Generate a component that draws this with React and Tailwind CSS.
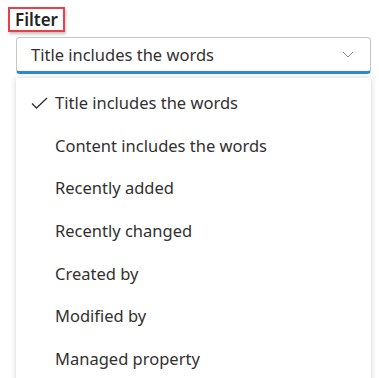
import React from "react";

const items = [
  "Title includes the words",
  "Content includes the words",
  "Recently added",
  "Recently changed",
  "Created by",
  "Modified by",
  "Managed property",
];

export default function App() {
  return (
    <div className="w-[379px] h-[378px] overflow-hidden bg-white relative" style={{ fontFamily: '"Noto Sans", "Open Sans", sans-serif' }}>
      <div className="pt-[7px] pl-[8px]">
        <div className="inline-flex items-center h-[25px] pl-[5px] pr-[5px] border-2 border-[#e8404a] shadow-[1px_2px_3px_rgba(0,0,0,0.25)]">
          <span className="text-[17px] font-semibold text-[#252423] leading-none">Filter</span>
        </div>
      </div>
      <div className="ml-[16px] mt-[5px] w-[355px] h-[37px] rounded-[4px] border border-[#c8c6c4] border-b-[3px] border-b-[#2b88d8] flex items-center pl-[14px] pr-[16px] pt-[2px] justify-between">
        <span className="text-[16.5px] text-[#323130]">Title includes the words</span>
        <svg width="12" height="7" viewBox="0 0 12 7" fill="none" className="-mt-[2px]">
          <path d="M1 1l5 5 5-5" stroke="#8a8886" strokeWidth="1" />
        </svg>
      </div>
      <div className="absolute left-[16px] top-[78px] w-[355px] h-[320px] bg-white shadow-[0_0_6px_rgba(0,0,0,0.18)] pt-[4px]">
        {items.map((t, i) => (
          <div key={t} className="h-[42.67px] flex items-center">
            <div className="w-[39px] flex justify-end pr-[7px]">
              {i === 0 && (
                <svg width="17" height="12" viewBox="0 0 17 12" fill="none">
                  <path d="M1 6.5l4.5 4.5L16 1" stroke="#323130" strokeWidth="1.3" />
                </svg>
              )}
            </div>
            <span className="text-[16.5px] text-[#323130]">{t}</span>
          </div>
        ))}
      </div>
    </div>
  );
}
